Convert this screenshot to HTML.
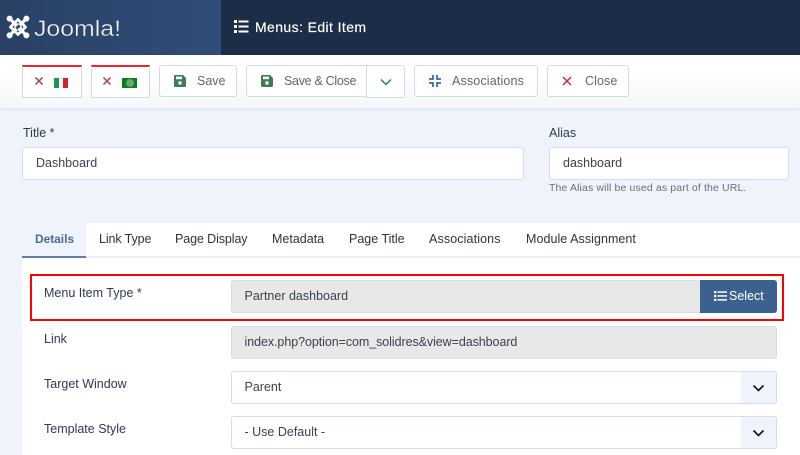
<!DOCTYPE html>
<html><head><meta charset="utf-8">
<style>
html,body{margin:0;padding:0}
body{width:800px;height:455px;overflow:hidden;position:relative;background:#eff3fb;font-family:"Liberation Sans",sans-serif;font-size:12.5px;color:#22324a}
.a{position:absolute;white-space:nowrap}
.btn{position:absolute;top:65px;height:32px;box-sizing:border-box;background:#fff;border:1px solid #d3dae6;border-radius:3px;color:#5d6672;line-height:30px;white-space:nowrap}
.flagbtn{position:absolute;top:65px;height:33px;box-sizing:border-box;background:#fff;border:1px solid #d3d9e4;border-top:2px solid #f5222a}
.inp{position:absolute;box-sizing:border-box;height:33px;background:#fff;border:1px solid #d3deed;border-radius:3px;line-height:31px;padding-left:12.5px;color:#3a4250}
.dis{background:#e8e8e8;border-color:#d3deed}
.car{position:absolute;right:0;top:0;bottom:0;width:35px;background:#eff3fb;border-radius:0 3px 3px 0}
.lbl{color:#2c3a52}
.tab{position:absolute;top:232px;color:#2b3440}
svg{display:block;position:absolute}
svg text{font-family:"Liberation Sans",sans-serif}
</style></head><body>

<div class="a" style="left:0;top:0;width:800px;height:55px;background:#1c2d48"></div>
<div class="a" style="left:0;top:0;width:221px;height:55px;background:linear-gradient(90deg,#2a4165,#2f4d78)"></div>

<svg style="left:6px;top:15px" width="24" height="24" viewBox="0 0 24 24" fill="none" stroke-linecap="round">
<path d="M4.5 4.5L19.5 19.5M19.5 4.5L4.5 19.5" stroke="#fff" stroke-width="3.2"/>
<path d="M12 4.5L19.5 12L12 19.5L4.5 12Z" stroke="#fff" stroke-width="2.8" stroke-linejoin="round"/>
<path d="M12 8.7L15.3 12L12 15.3L8.7 12Z" fill="#2b4469"/>
<path d="M8.8 12L12 8.8M15.2 12L12 15.2" stroke="#fff" stroke-width="1.6"/>
<circle cx="3.6" cy="3.6" r="3" fill="#fff"/><circle cx="20.4" cy="3.6" r="3" fill="#fff"/>
<circle cx="3.6" cy="20.4" r="3" fill="#fff"/><circle cx="20.4" cy="20.4" r="3" fill="#fff"/>
</svg>
<svg style="left:33px;top:12px" width="92" height="32" viewBox="0 0 92 32"><text x="1" y="24" font-size="22" fill="#f2f4f8" stroke="#2b4469" stroke-width=".35" textLength="87" lengthAdjust="spacingAndGlyphs">Joomla!</text></svg>

<svg style="left:234px;top:20px" width="15" height="13" viewBox="0 0 15 13" fill="#fff">
<rect x="0" y="0" width="3" height="3"/><rect x="0" y="5" width="3" height="3"/><rect x="0" y="10" width="3" height="3"/>
<rect x="4.5" y=".5" width="10" height="2"/><rect x="4.5" y="5.5" width="10" height="2"/><rect x="4.5" y="10.5" width="10" height="2"/>
</svg>
<div class="a" style="left:255px;top:18px;font-size:14px;line-height:18px;color:#fff;letter-spacing:.4px;-webkit-text-stroke:.15px #fff">Menus: Edit Item</div>

<div class="a" style="left:0;top:55px;width:800px;height:53px;background:linear-gradient(180deg,#fff 0%,#fff 30%,#f5f7fb 100%);box-shadow:0 1px 3px rgba(30,50,90,.1)"></div>

<div class="flagbtn" style="left:22px;width:60px"></div>
<svg style="left:34px;top:76px" width="10" height="10" viewBox="0 0 10 10"><path d="M1.5 1.5L8.5 8.5M8.5 1.5L1.5 8.5" stroke="#b0413e" stroke-width="1.5"/></svg>
<div class="a" style="left:54px;top:78px;width:5px;height:10px;background:#169b57"></div>
<div class="a" style="left:59px;top:78px;width:4px;height:10px;background:#f2f2f2"></div>
<div class="a" style="left:63px;top:78px;width:5px;height:10px;background:#d3212f"></div>

<div class="flagbtn" style="left:91px;width:59px"></div>
<svg style="left:102px;top:76px" width="10" height="10" viewBox="0 0 10 10"><path d="M1.5 1.5L8.5 8.5M8.5 1.5L1.5 8.5" stroke="#b0413e" stroke-width="1.5"/></svg>
<div class="a" style="left:122px;top:78px;width:15px;height:10px;background:#0f7d1a"></div>
<div class="a" style="left:126px;top:79px;width:8px;height:8px;border-radius:50%;background:#6aa56d"></div>

<div class="btn" style="left:159px;width:78px;padding-left:37px">Save</div>
<svg style="left:174px;top:75px" width="12" height="12" viewBox="0 0 12 12"><path d="M0 1.2A1.2 1.2 0 0 1 1.2 0H9L12 3V10.8A1.2 1.2 0 0 1 10.8 12H1.2A1.2 1.2 0 0 1 0 10.8Z" fill="#3f7d58"/><rect x="2" y="1.6" width="6" height="2.6" fill="#fff"/><circle cx="6" cy="8" r="1.7" fill="#fff"/></svg>

<div class="btn" style="left:246px;width:121px;padding-left:37px;border-radius:3px 0 0 3px;letter-spacing:-.3px">Save &amp; Close</div>
<svg style="left:261px;top:75px" width="12" height="12" viewBox="0 0 12 12"><path d="M0 1.2A1.2 1.2 0 0 1 1.2 0H9L12 3V10.8A1.2 1.2 0 0 1 10.8 12H1.2A1.2 1.2 0 0 1 0 10.8Z" fill="#3f7d58"/><rect x="2" y="1.6" width="6" height="2.6" fill="#fff"/><circle cx="6" cy="8" r="1.7" fill="#fff"/></svg>
<div class="btn" style="left:366px;width:39px;top:65px;height:33px;border-radius:0 3px 3px 0"></div>
<svg style="left:380px;top:78px" width="12" height="8" viewBox="0 0 12 8"><path d="M1 1.5L6 6.5L11 1.5" fill="none" stroke="#2f6f5e" stroke-width="1.4"/></svg>

<div class="btn" style="left:414px;width:124px;padding-left:37px;letter-spacing:.15px">Associations</div>
<svg style="left:429px;top:75px" width="12" height="12" viewBox="0 0 12 12" fill="none" stroke="#2a69b8" stroke-width="1.7"><path d="M4 0V4H0M8 0V4H12M4 12V8H0M8 12V8H12"/></svg>

<div class="btn" style="left:547px;width:82px;padding-left:37px;letter-spacing:.1px">Close</div>
<svg style="left:562px;top:76px" width="10" height="10" viewBox="0 0 10 10"><path d="M1 1L9 9M9 1L1 9" stroke="#cf2e2e" stroke-width="1.5"/></svg>

<div class="a lbl" style="left:23px;top:125px;line-height:16px">Title *</div>
<div class="inp" style="left:22px;top:147px;width:502px;padding-left:13px">Dashboard</div>
<div class="a lbl" style="left:549px;top:125px;line-height:16px">Alias</div>
<div class="inp" style="left:549px;top:147px;width:240px;padding-left:13px">dashboard</div>
<div class="a" style="left:549px;top:181px;font-size:10.5px;line-height:14px;color:#68707c;letter-spacing:.13px">The Alias will be used as part of the URL.</div>

<div class="a" style="left:22px;top:223px;width:778px;height:232px;background:#fff"></div>
<div class="a" style="left:22px;top:256px;width:778px;height:2px;background:#eef1f7"></div>
<div class="a" style="left:22px;top:223px;width:64px;height:33px;background:#eff3fb"></div>
<div class="a" style="left:22px;top:256px;width:64px;height:2px;background:#5d7ea8"></div>
<div class="tab a" style="left:35px;font-weight:bold;color:#4c6a96;line-height:15px;font-size:12px;letter-spacing:-.05px">Details</div>
<div class="tab a" style="left:99px;line-height:15px;letter-spacing:-.1px">Link Type</div>
<div class="tab a" style="left:175px;line-height:15px;letter-spacing:-.1px">Page Display</div>
<div class="tab a" style="left:272px;line-height:15px">Metadata</div>
<div class="tab a" style="left:349px;line-height:15px">Page Title</div>
<div class="tab a" style="left:429px;line-height:15px;letter-spacing:.12px">Associations</div>
<div class="tab a" style="left:526px;line-height:15px;letter-spacing:.05px">Module Assignment</div>

<div class="a lbl" style="left:44px;top:285px;line-height:16px">Menu Item Type *</div>
<div class="inp dis" style="left:231px;top:280px;width:470px;border-radius:3px 0 0 3px">Partner dashboard</div>
<div class="a" style="left:700px;top:280px;width:77px;height:33px;background:#3b618e;border-radius:0 3px 3px 0;color:#fff;line-height:32px;box-sizing:border-box;padding-left:29px;font-size:12.5px">Select</div>
<svg style="left:714px;top:291px" width="13" height="10" viewBox="0 0 13 10" fill="#fff"><rect width="2.4" height="2.2"/><rect y="3.9" width="2.4" height="2.2"/><rect y="7.8" width="2.4" height="2.2"/><rect x="3.6" y=".3" width="9.4" height="1.5"/><rect x="3.6" y="4.2" width="9.4" height="1.5"/><rect x="3.6" y="8.1" width="9.4" height="1.5"/></svg>
<div class="a" style="left:30px;top:274px;width:754px;height:47px;box-sizing:border-box;border:2.5px solid #f00"></div>

<div class="a lbl" style="left:44px;top:331px;line-height:16px">Link</div>
<div class="inp dis" style="left:231px;top:326px;width:546px;letter-spacing:-.07px">index.php?option=com_solidres&amp;view=dashboard</div>

<div class="a lbl" style="left:44px;top:376px;line-height:16px">Target Window</div>
<div class="inp" style="left:231px;top:371px;width:546px">Parent<div class="car"></div></div>
<svg style="left:752px;top:384px" width="13" height="8" viewBox="0 0 13 8"><path d="M1.5 1.5L6.5 6.5L11.5 1.5" fill="none" stroke="#111" stroke-width="1.6"/></svg>

<div class="a lbl" style="left:44px;top:421px;line-height:16px">Template Style</div>
<div class="inp" style="left:231px;top:416px;width:546px">- Use Default -<div class="car"></div></div>
<svg style="left:752px;top:429px" width="13" height="8" viewBox="0 0 13 8"><path d="M1.5 1.5L6.5 6.5L11.5 1.5" fill="none" stroke="#111" stroke-width="1.6"/></svg>

</body></html>
